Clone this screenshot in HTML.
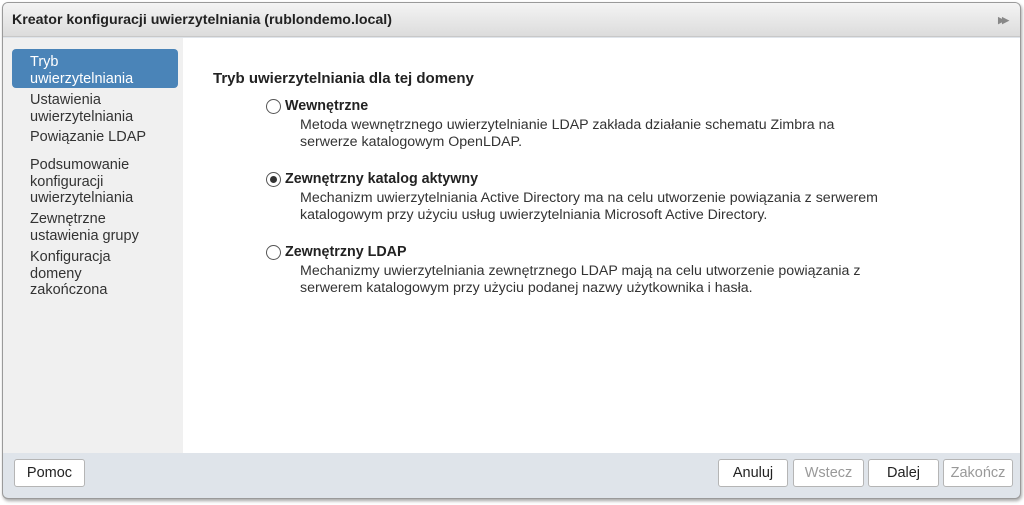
<!DOCTYPE html>
<html><head><meta charset="utf-8"><style>
*{margin:0;padding:0;box-sizing:border-box}
body{width:1024px;height:505px;background:#fff;font-family:"Liberation Sans",Arial,sans-serif;position:relative;overflow:hidden}
.dlg{position:absolute;left:2px;top:2px;width:1019px;height:497px;border:1px solid #9a9a9a;border-radius:6px;background:#dfe4ea;box-shadow:1px 2px 3px rgba(0,0,0,.35);overflow:hidden}
.title{position:absolute;left:0;top:0;right:0;height:34px;background:linear-gradient(#f4f4f4,#dcdcdc);border-bottom:1px solid #c8c8c8;font-size:14.2px;font-weight:bold;color:#222;padding:9px 0 0 9px}
.arr{position:absolute;right:14px;top:12px;font-size:9px;color:#888;letter-spacing:-3px}
.side{position:absolute;left:0;top:35px;width:180px;height:415px;background:#f0f0f0}
.item{position:absolute;left:27px;font-size:14.5px;line-height:16.5px;color:#333}
.sel{position:absolute;left:9px;top:11px;width:166px;height:39px;background:#4a84b8;border-radius:4px}
.main{position:absolute;left:180px;top:35px;right:0;height:415px;background:#fff}
.h{position:absolute;left:30px;top:32px;font-size:15px;font-weight:bold;color:#222}
.opt{position:absolute;left:102px;font-size:14.3px;font-weight:bold;color:#222}
.rad{position:absolute;left:-19px;top:1px;width:15px;height:15px;border:1px solid #555;border-radius:50%;background:#fff}
.rad.on:after{content:"";position:absolute;left:3px;top:3px;width:7px;height:7px;border-radius:50%;background:#333}
.desc{position:absolute;left:117px;font-size:14.2px;line-height:17px;color:#333}
.btn{position:absolute;top:456px;height:28px;border:1px solid #b5b5b5;border-radius:3px;background:#fff;font-size:14.5px;color:#222;text-align:center;line-height:26px}
.dis{color:#999}
</style></head><body>
<div class="dlg">
<div class="title">Kreator konfiguracji uwierzytelniania (rublondemo.local)<span class="arr">▶▶</span></div>
<div class="side">
<div class="sel"></div>
<div class="item" style="top:16px;color:#fff">Tryb<br>uwierzytelniania</div>
<div class="item" style="top:54px">Ustawienia<br>uwierzytelniania</div>
<div class="item" style="top:91px">Powiązanie LDAP</div>
<div class="item" style="top:119px">Podsumowanie<br>konfiguracji<br>uwierzytelniania</div>
<div class="item" style="top:173px">Zewnętrzne<br>ustawienia grupy</div>
<div class="item" style="top:211px">Konfiguracja<br>domeny<br>zakończona</div>
</div>
<div class="main">
<div class="h">Tryb uwierzytelniania dla tej domeny</div>
<div class="opt" style="top:60px"><span class="rad"></span>Wewnętrzne</div>
<div class="desc" style="top:79px">Metoda wewnętrznego uwierzytelnianie LDAP zakłada działanie schematu Zimbra na<br>serwerze katalogowym OpenLDAP.</div>
<div class="opt" style="top:133px"><span class="rad on"></span>Zewnętrzny katalog aktywny</div>
<div class="desc" style="top:152px">Mechanizm uwierzytelniania Active Directory ma na celu utworzenie powiązania z serwerem<br>katalogowym przy użyciu usług uwierzytelniania Microsoft Active Directory.</div>
<div class="opt" style="top:206px"><span class="rad"></span>Zewnętrzny LDAP</div>
<div class="desc" style="top:225px">Mechanizmy uwierzytelniania zewnętrznego LDAP mają na celu utworzenie powiązania z<br>serwerem katalogowym przy użyciu podanej nazwy użytkownika i hasła.</div>
</div>
<div class="btn" style="left:11px;width:71px">Pomoc</div>
<div class="btn" style="left:715px;width:70px">Anuluj</div>
<div class="btn dis" style="left:790px;width:71px">Wstecz</div>
<div class="btn" style="left:865px;width:71px">Dalej</div>
<div class="btn dis" style="left:940px;width:70px">Zakończ</div>
</div>
</body></html>
